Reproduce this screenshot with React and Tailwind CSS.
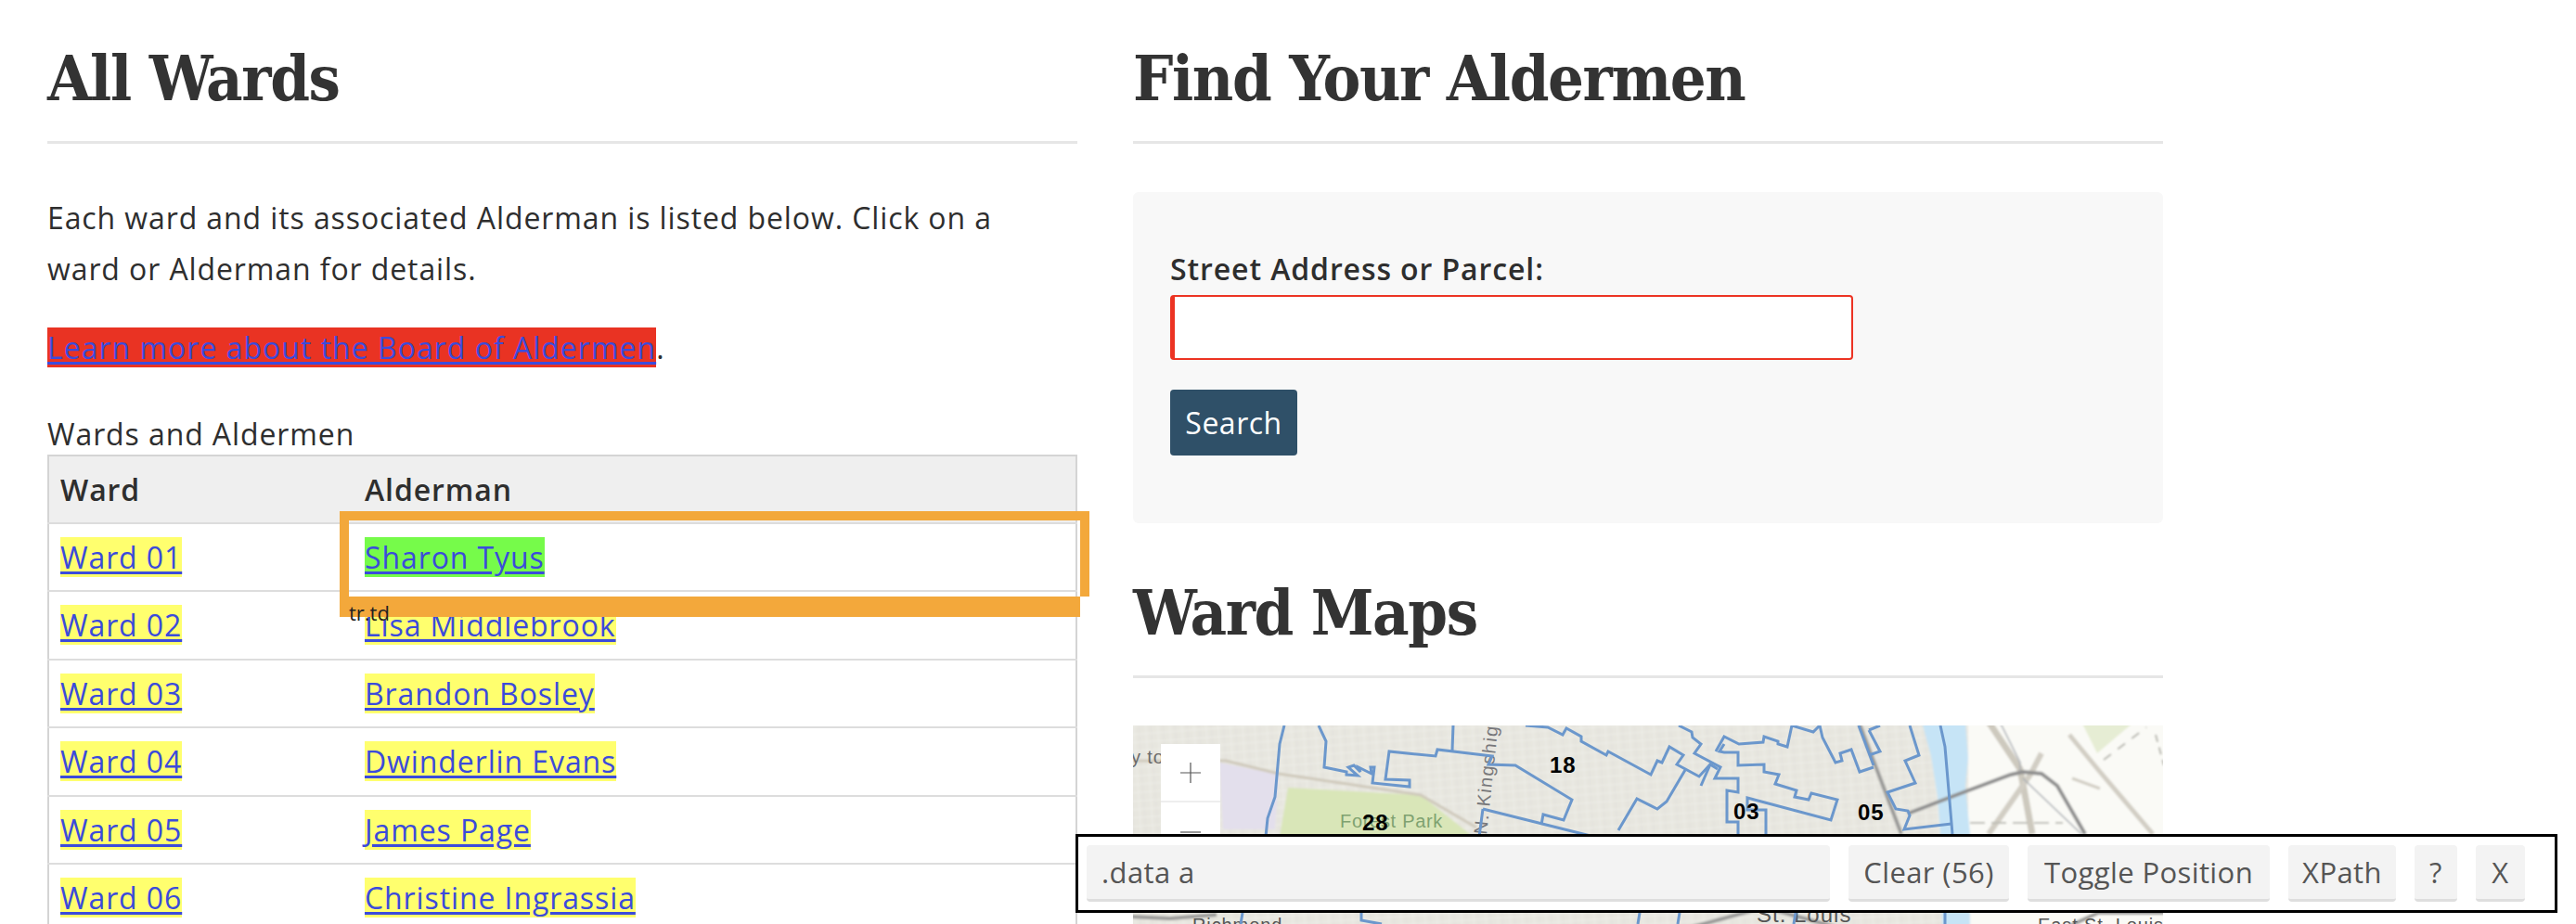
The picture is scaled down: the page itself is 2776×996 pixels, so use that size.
const wards = [
  ["Ward 01", "Sharon Tyus"],
  ["Ward 02", "Lisa Middlebrook"],
  ["Ward 03", "Brandon Bosley"],
  ["Ward 04", "Dwinderlin Evans"],
  ["Ward 05", "James Page"],
  ["Ward 06", "Christine Ingrassia"],
];

const boundaries = [
  "163,0 158,20 153,77 145,100 143,120",
  "200,0 208,17 206,45 230,50 230,53 242,54 232,45 238,43 245,50 243,45 257,52 256,45 260,45 258,62 298,66 298,59 272,58 276,28 326,33 328,26 387,33 383,42 412,43 473,80 464,102 442,96 440,107",
  "345,0 344,27",
  "377,90 373,120",
  "377,90 493,119",
  "423,0 447,2 463,10 467,3 483,12 483,17 510,32 512,28 558,53 565,38 570,40 578,23 593,32 586,42 610,55 622,42 630,47",
  "588,0 602,7 603,13 612,20 605,30 633,45 627,57 652,57 652,72 640,70 640,104 652,104 652,120",
  "622,42 612,65",
  "595,48 575,82 565,90 543,79 523,113",
  "628,28 637,12 653,20 679,18 680,12 695,17 695,20 705,23 710,0 733,7 740,0 743,13 757,40 764,38 762,30 774,26 783,50 798,45",
  "637,20 632,28 637,29 652,29 652,43 680,42 680,50 696,53 692,63 715,70 713,77 728,80 731,73 759,80 752,102 662,78 662,91 682,91 682,120",
  "782,0 798,43",
  "793,5 805,0",
  "793,5 805,28 793,32",
  "837,0 847,32 832,38 843,62 813,72 822,90 835,92 837,97 831,112 882,106",
  "870,0 875,23 883,117",
];

const lowerBoundaries = [
  "118,202 116,214",
  "246,202 246,210 268,214",
  "546,202 544,214",
  "589,202 587,214",
  "714,202 712,214",
  "875,202 875,214",
];

const rails = [
  { points: "922,-4 956,47 969,117", color: "#cdc9be", width: 7 },
  { points: "1009,10 1042,50 1099,117", color: "#d2cec4", width: 5 },
  { points: "979,30 967,53 922,117", color: "#d2cec4", width: 6 },
  { points: "1012,57 1042,68", color: "#d2cec4", width: 3 },
  { points: "934,-4 956,40 956,50", color: "#a9adb3", width: 1.5 },
  { points: "959,57 1022,117", color: "#a9adb3", width: 1.5 },
];

function WardMap() {
  return (
    <svg viewBox="0 0 1110 214" className="block h-[214px] w-[1110px]">
      <defs>
        <pattern id="blocks" width="13" height="9" patternUnits="userSpaceOnUse" patternTransform="rotate(-4)">
          <rect width="13" height="9" fill="#e7e6df" />
          <path d="M0 0H13M0 0V9" stroke="#f1f1ec" strokeWidth="1.3" />
          <path d="M6 1V9" stroke="#dddcd5" strokeWidth="0.6" />
        </pattern>
        <filter id="soft">
          <feGaussianBlur stdDeviation="1.1" />
        </filter>
      </defs>
      <g filter="url(#soft)">
        <rect x="-4" y="-4" width="1118" height="222" fill="url(#blocks)" />
        <polygon points="900,-4 1114,-4 1114,218 900,218" fill="#fafaf6" />
        <polygon points="1022,-4 1079,-4 1039,30" fill="#e6edd4" />
        <polygon points="93,40 157,53 153,112 97,112" fill="#e3dfec" />
        <polygon points="167,67 310,75 363,117 363,125 157,125" fill="#d9e6b8" />
        <polygon points="850,-4 897,-4 900,35 897,66 902,117 902,218 872,218 870,117 867,77 860,33" fill="#c6e4f6" />
        <polyline points="0,38 100,38 157,52 310,75 370,110" fill="none" stroke="#cfc9bb" strokeWidth="3" />
        {rails.map((rail) => (
          <polyline key={rail.points} points={rail.points} fill="none" stroke={rail.color} strokeWidth={rail.width} />
        ))}
        <polyline points="902,105 1002,105" fill="none" stroke="#bdbdb5" strokeWidth="2" strokeDasharray="16 7" />
        <polyline points="1046,37 1092,2" fill="none" stroke="#b5b5ad" strokeWidth="2" strokeDasharray="10 9" />
        <polyline points="1102,10 1111,43" fill="none" stroke="#b5b5ad" strokeWidth="2" strokeDasharray="8 6" />
        <polyline points="782,-4 828,117" fill="none" stroke="#9a9a98" strokeWidth="4" />
        <polyline points="835,95 879,78 946,53 959,50 979,52 996,65 1026,117" fill="none" stroke="#8f8f8f" strokeWidth="4" />
        <polyline points="600,218 680,196 760,218" fill="none" stroke="#9a9a98" strokeWidth="4" />
        <polyline points="1005,218 1040,202 1114,202" fill="none" stroke="#9a9a98" strokeWidth="4" />
        <polyline points="-4,206 40,208 90,204" fill="none" stroke="#9a9a98" strokeWidth="4" />
      </g>
      <text x="-2" y="41" className="fill-[#6b6b6b] text-[20px] [font-family:'Liberation_Sans',sans-serif]">y to</text>
      <text x="223" y="110" className="fill-[#7fa270] text-[20px] tracking-[0.7px] [font-family:'Liberation_Sans',sans-serif]">Forest Park</text>
      <text x="0" y="0" transform="translate(381,118) rotate(-84)" className="fill-[#77777a] text-[20px] tracking-[1.5px] [font-family:'Liberation_Sans',sans-serif]">N. Kingshig</text>
      <text x="64" y="222" className="fill-[#555] text-[20px] [font-family:'Liberation_Sans',sans-serif]">Richmond</text>
      <text x="672" y="212" className="fill-[#555] text-[24px] tracking-[1px] [font-family:'Liberation_Sans',sans-serif]">St. Louis</text>
      <text x="975" y="222" className="fill-[#555] text-[20px] [font-family:'Liberation_Sans',sans-serif]">East St. Louis</text>
      {boundaries.concat(lowerBoundaries).map((points) => (
        <polyline key={points} points={points} fill="none" stroke="#6b97cc" strokeWidth="3" />
      ))}
      <g className="fill-black text-[24px] font-bold [font-family:'Liberation_Sans',sans-serif]">
        <text x="449" y="51">18</text>
        <text x="247" y="113">28</text>
        <text x="647" y="101">03</text>
        <text x="781" y="102">05</text>
      </g>
    </svg>
  );
}

function Heading({ children }) {
  return (
    <h2 className="border-b-[3px] border-[#e6e6e6] pb-[30px] text-[68px] leading-[76px] font-bold tracking-[-1.4px] text-[#333] [font-family:'DejaVu_Serif_Condensed','DejaVu_Serif',serif]">
      {children}
    </h2>
  );
}

function DataLink({ children, green }) {
  return (
    <a
      href="#"
      className={`text-[#3b4bdb] underline decoration-[3px] underline-offset-[3px] ${green ? "bg-[#76fb4a]" : "bg-[#ffff6e]"}`}
    >
      {children}
    </a>
  );
}

function ToolButton({ width, children }) {
  return (
    <button className={`h-[61px] rounded-[4px] border-b-[3px] border-[#dedede] bg-[#f3f3f3] text-[#555] ${width}`}>
      {children}
    </button>
  );
}

export default function App() {
  return (
    <div className="relative h-[996px] overflow-hidden bg-white text-[32px] leading-[55px] tracking-[0.9px] text-[#2e2e2e] [font-family:'Open_Sans',sans-serif]">
      <div className="flex gap-[60px] pt-[46px] pl-[51px]">
        <div className="w-[1110px]">
          <Heading>All Wards</Heading>
          <p className="mt-[52px]">
            Each ward and its associated Alderman is listed below. Click on a
            <br />
            ward or Alderman for details.
          </p>
          <p className="mt-[30px]">
            <a href="#" className="bg-[#e93323] tracking-[1px] text-[#3b4bdb] underline decoration-[3px] underline-offset-[3px]">
              Learn more about the Board of Aldermen
            </a>
            .
          </p>
          <p className="mt-[44px] leading-[44px]">Wards and Aldermen</p>
          <table className="w-full border-collapse border-2 border-[#d4d4d4]">
            <thead>
              <tr className="h-[73px] bg-[#efefef] text-left">
                <th className="w-[327px] pl-[12px] font-semibold">Ward</th>
                <th className="pl-[14px] font-semibold">Alderman</th>
              </tr>
            </thead>
            <tbody>
              {wards.map(([ward, alderman], i) => (
                <tr key={ward} className={`${i === 0 ? "h-[73px]" : "h-[73.5px]"} border-t-2 border-[#dddddd]`}>
                  <td className="pl-[12px]">
                    <DataLink>{ward}</DataLink>
                  </td>
                  <td className="pl-[14px]">
                    <DataLink green={i === 0}>{alderman}</DataLink>
                  </td>
                </tr>
              ))}
            </tbody>
          </table>
        </div>

        <div className="w-[1110px]">
          <Heading>Find Your Aldermen</Heading>
          <form className="mt-[52px] h-[357px] rounded-[6px] bg-[#f8f8f8] px-[40px] pt-[55px]">
            <label className="block leading-[56px] font-semibold">Street Address or Parcel:</label>
            <input className="block h-[70px] w-[736px] rounded-[4px] border-2 border-l-[5px] border-[#ec3323] bg-white" />
            <button type="button" className="mt-[32px] h-[71px] w-[137px] rounded-[4px] bg-[#2f5068] tracking-[0.5px] text-white">
              Search
            </button>
          </form>
          <div className="mt-[58px]">
            <Heading>Ward Maps</Heading>
          </div>
          <div className="relative mt-[51px] w-[1110px]">
            <WardMap />
            <div className="absolute top-[20px] left-[30px] w-[64px] bg-white">
              <div className="flex h-[63px] items-center justify-center border-b-2 border-[#eeeeee]">
                <svg width="24" height="24" viewBox="0 0 24 24" stroke="#555" strokeWidth="1.2">
                  <path d="M1 12H23M12 1V23" />
                </svg>
              </div>
              <div className="flex h-[63px] items-center justify-center">
                <svg width="24" height="24" viewBox="0 0 24 24" stroke="#555" strokeWidth="1.2">
                  <path d="M1 12H23" />
                </svg>
              </div>
            </div>
          </div>
        </div>
      </div>

      {/* selector gadget highlight */}
      <div className="absolute top-[551px] left-[366px] h-[92px] w-[808px] border-x-[10px] border-t-[10px] border-[#f3a83b]">
        <div className="absolute top-[82px] left-[-10px] h-[22px] w-[798px] bg-[#f3a83b]">
          <span className="absolute top-[7px] left-[10px] text-[22px] leading-[20px] tracking-normal text-[#222]">tr.td</span>
        </div>
      </div>

      {/* selector gadget toolbar */}
      <div className="absolute top-[899px] left-[1159px] flex h-[85px] w-[1597px] items-center gap-[20px] border-[3px] border-black bg-white pl-[9px] text-[31px] tracking-[0.4px] text-[#555]">
        <div className="flex h-[61px] w-[801px] items-center rounded-[4px] border-b-[3px] border-[#dedede] bg-[#f3f3f3] pl-[16px]">
          .data a
        </div>
        <ToolButton width="w-[173px]">Clear (56)</ToolButton>
        <ToolButton width="w-[261px]">Toggle Position</ToolButton>
        <ToolButton width="w-[116px]">XPath</ToolButton>
        <ToolButton width="w-[46px]">?</ToolButton>
        <ToolButton width="w-[53px]">X</ToolButton>
      </div>
    </div>
  );
}
